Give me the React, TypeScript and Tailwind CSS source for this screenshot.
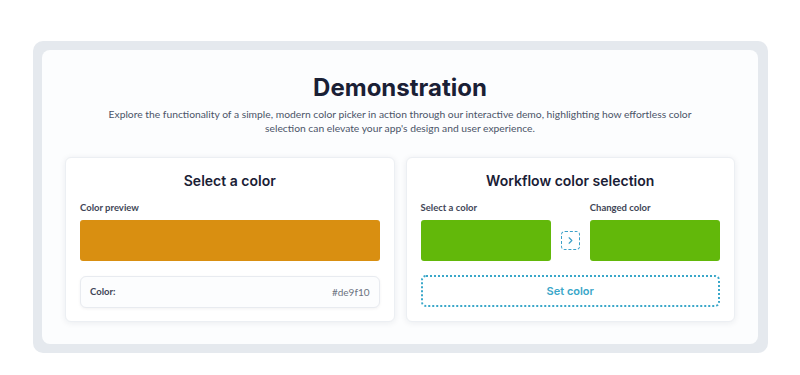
import { ChevronRight } from "lucide-react";

const inter = { fontFamily: "Inter, 'Noto Sans', sans-serif" };
const lato = { fontFamily: "Lato, 'Open Sans', sans-serif" };

function Card({ title, children }: { title: string; children: React.ReactNode }) {
  return (
    <div className="flex flex-1 flex-col rounded-md border border-[#eceff3] bg-white px-[14px] pb-[13px] pt-[14px] shadow-[0_1px_6px_rgba(30,41,59,0.08)]">
      <h2 className="text-center text-[14px] font-semibold leading-[17px] text-[#1a2035]" style={inter}>
        {title}
      </h2>
      {children}
    </div>
  );
}

export default function App() {
  return (
    <div className="h-[375px] w-[800px] bg-white pt-[41px] pl-[33px]">
      <div className="h-[312px] w-[735px] rounded-[10px] bg-[#e5e9ee] p-[9px] pr-[10px]">
        <div className="flex h-[294px] flex-col rounded-lg bg-[#fcfdfe] px-[23px] pt-[23px]">
          <h1 className="text-center text-[24px] font-bold leading-[30px] text-[#1a2035]" style={inter}>
            Demonstration
          </h1>
          <p className="mt-[4px] whitespace-nowrap text-center text-[10.3px] leading-[14px] text-[#4b5468]" style={lato}>
            Explore the functionality of a simple, modern color picker in action through our interactive demo, highlighting how effortless color
            <br />
            selection can elevate your app's design and user experience.
          </p>
          <div className="mt-[22px] flex gap-[11px]">
            <Card title="Select a color">
              <div className="mt-[13px] text-[9.5px] font-bold leading-[12px] text-[#3f4657]" style={lato}>
                Color preview
              </div>
              <div className="mt-[6px] h-[41px] rounded-[3px] bg-[#d98f11]" />
              <div className="mt-[15px] flex h-[32px] items-center justify-between rounded-md border border-[#e8ebf0] bg-[#fcfdfe] px-[9px] shadow-[0_1px_3px_rgba(30,41,59,0.06)]" style={lato}>
                <span className="text-[9.5px] font-bold text-[#3f4657]">Color:</span>
                <span className="text-[10px] text-[#6b7280]">#de9f10</span>
              </div>
            </Card>
            <Card title="Workflow color selection">
              <div className="mt-[13px] flex items-end gap-[10px]">
                <div className="flex flex-1 flex-col">
                  <div className="text-[9.5px] font-bold leading-[12px] text-[#3f4657]" style={lato}>
                    Select a color
                  </div>
                  <div className="mt-[6px] h-[41px] rounded-[3px] bg-[#62b80a]" />
                </div>
                <div className="mb-[11px] flex h-[19px] w-[19px] items-center justify-center rounded-[4px] border border-dashed border-[#3aa0c8] text-[#3aa0c8]">
                  <ChevronRight size={11} strokeWidth={2.5} />
                </div>
                <div className="flex flex-1 flex-col">
                  <div className="text-[9.5px] font-bold leading-[12px] text-[#3f4657]" style={lato}>
                    Changed color
                  </div>
                  <div className="mt-[6px] h-[41px] rounded-[3px] bg-[#62b80a]" />
                </div>
              </div>
              <button
                className="mt-[14px] h-[32px] w-full rounded-[5px] border-2 border-dotted border-[#3aa7c9] bg-white text-[11px] font-semibold text-[#3aa7c9]"
                style={inter}
              >
                Set color
              </button>
            </Card>
          </div>
        </div>
      </div>
    </div>
  );
}
